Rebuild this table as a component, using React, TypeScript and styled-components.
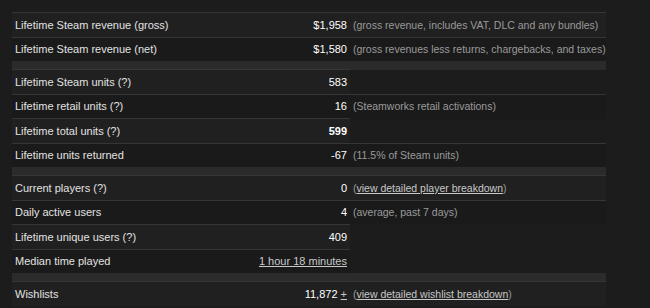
import * as React from 'react';
import {FC} from 'react';
import styled, {createGlobalStyle} from 'styled-components';

const GlobalStyle = createGlobalStyle`
    html, body {
        margin: 0;
        padding: 0;
        background: #1c1c1c;
    }
`;

const Page = styled.div`
    width: 650px;
    height: 308px;
    padding: 12px 0 0 12px;
    box-sizing: border-box;
    background: #1c1c1c;
    font-family: "Liberation Sans", Arial, sans-serif;
    font-size: 11px;
    overflow: hidden;
`;

const StatsTable = styled.table`
    border-collapse: collapse;
    table-layout: fixed;
    width: 594px;
`;

const DataRow = styled.tr<{ $dark: boolean }>`
    & > td {
        height: 23.5px;
        padding: 0;
        border-top: 1px solid #363636;
        background: ${p => p.$dark ? '#1a1a1a' : '#202020'};
        white-space: nowrap;
    }
    & > td:empty {
        background: transparent;
        border-top-color: transparent;
    }
`;

const Spacer = styled.tr`
    & > td {
        height: 8px;
        padding: 0;
        background: #2b2b2b;
    }
`;

const Label = styled.td`
    color: #e2e2e2;
    padding-left: 3px !important;
`;

const Value = styled.td<{ $strong?: boolean }>`
    color: #ffffff;
    text-align: right;
    padding-right: 3px !important;
    font-weight: ${p => p.$strong ? 'bold' : 'normal'};
`;

const Note = styled.td`
    color: #9a9a9a;
    font-size: 10.5px;
    padding-left: 3px !important;
`;

const EmptyCell = styled.td``;

const Link = styled.a`
    color: #c8c8c8;
    text-decoration: underline;
`;

type Row = {
  label: string;
  value: React.ReactNode;
  note?: React.ReactNode;
  strong?: boolean;
};

const groups: Row[][] = [
  [
    {label: 'Lifetime Steam revenue (gross)', value: '$1,958', note: '(gross revenue, includes VAT, DLC and any bundles)'},
    {label: 'Lifetime Steam revenue (net)', value: '$1,580', note: '(gross revenues less returns, chargebacks, and taxes)'},
  ],
  [
    {label: 'Lifetime Steam units (?)', value: '583'},
    {label: 'Lifetime retail units (?)', value: '16', note: '(Steamworks retail activations)'},
    {label: 'Lifetime total units (?)', value: '599', strong: true},
    {label: 'Lifetime units returned', value: '-67', note: '(11.5% of Steam units)'},
  ],
  [
    {label: 'Current players (?)', value: '0', note: <>(<Link href="#">view detailed player breakdown</Link>)</>},
    {label: 'Daily active users', value: '4', note: '(average, past 7 days)'},
    {label: 'Lifetime unique users (?)', value: '409'},
    {label: 'Median time played', value: <Link href="#">1 hour 18 minutes</Link>},
  ],
  [
    {label: 'Wishlists', value: <>11,872 <Link href="#">+</Link></>, note: <>(<Link href="#">view detailed wishlist breakdown</Link>)</>},
  ],
];

export const App: FC = () => {
  let n = 0;
  return <>
    <GlobalStyle/>
    <Page>
      <StatsTable>
        <colgroup>
          <col style={{width: 240}}/>
          <col style={{width: 98}}/>
          <col style={{width: 256}}/>
        </colgroup>
        <tbody>
        {groups.map((group, gi) => (
          <React.Fragment key={gi}>
            {gi > 0 && <Spacer><td colSpan={3}/></Spacer>}
            {group.map(row => {
              n++;
              return <DataRow key={row.label} $dark={n % 2 === 0}>
                <Label>{row.label}</Label>
                <Value $strong={row.strong}>{row.value}</Value>
                {row.note ? <Note>{row.note}</Note> : <EmptyCell/>}
              </DataRow>;
            })}
          </React.Fragment>
        ))}
        </tbody>
      </StatsTable>
    </Page>
  </>;
};

export default App;
